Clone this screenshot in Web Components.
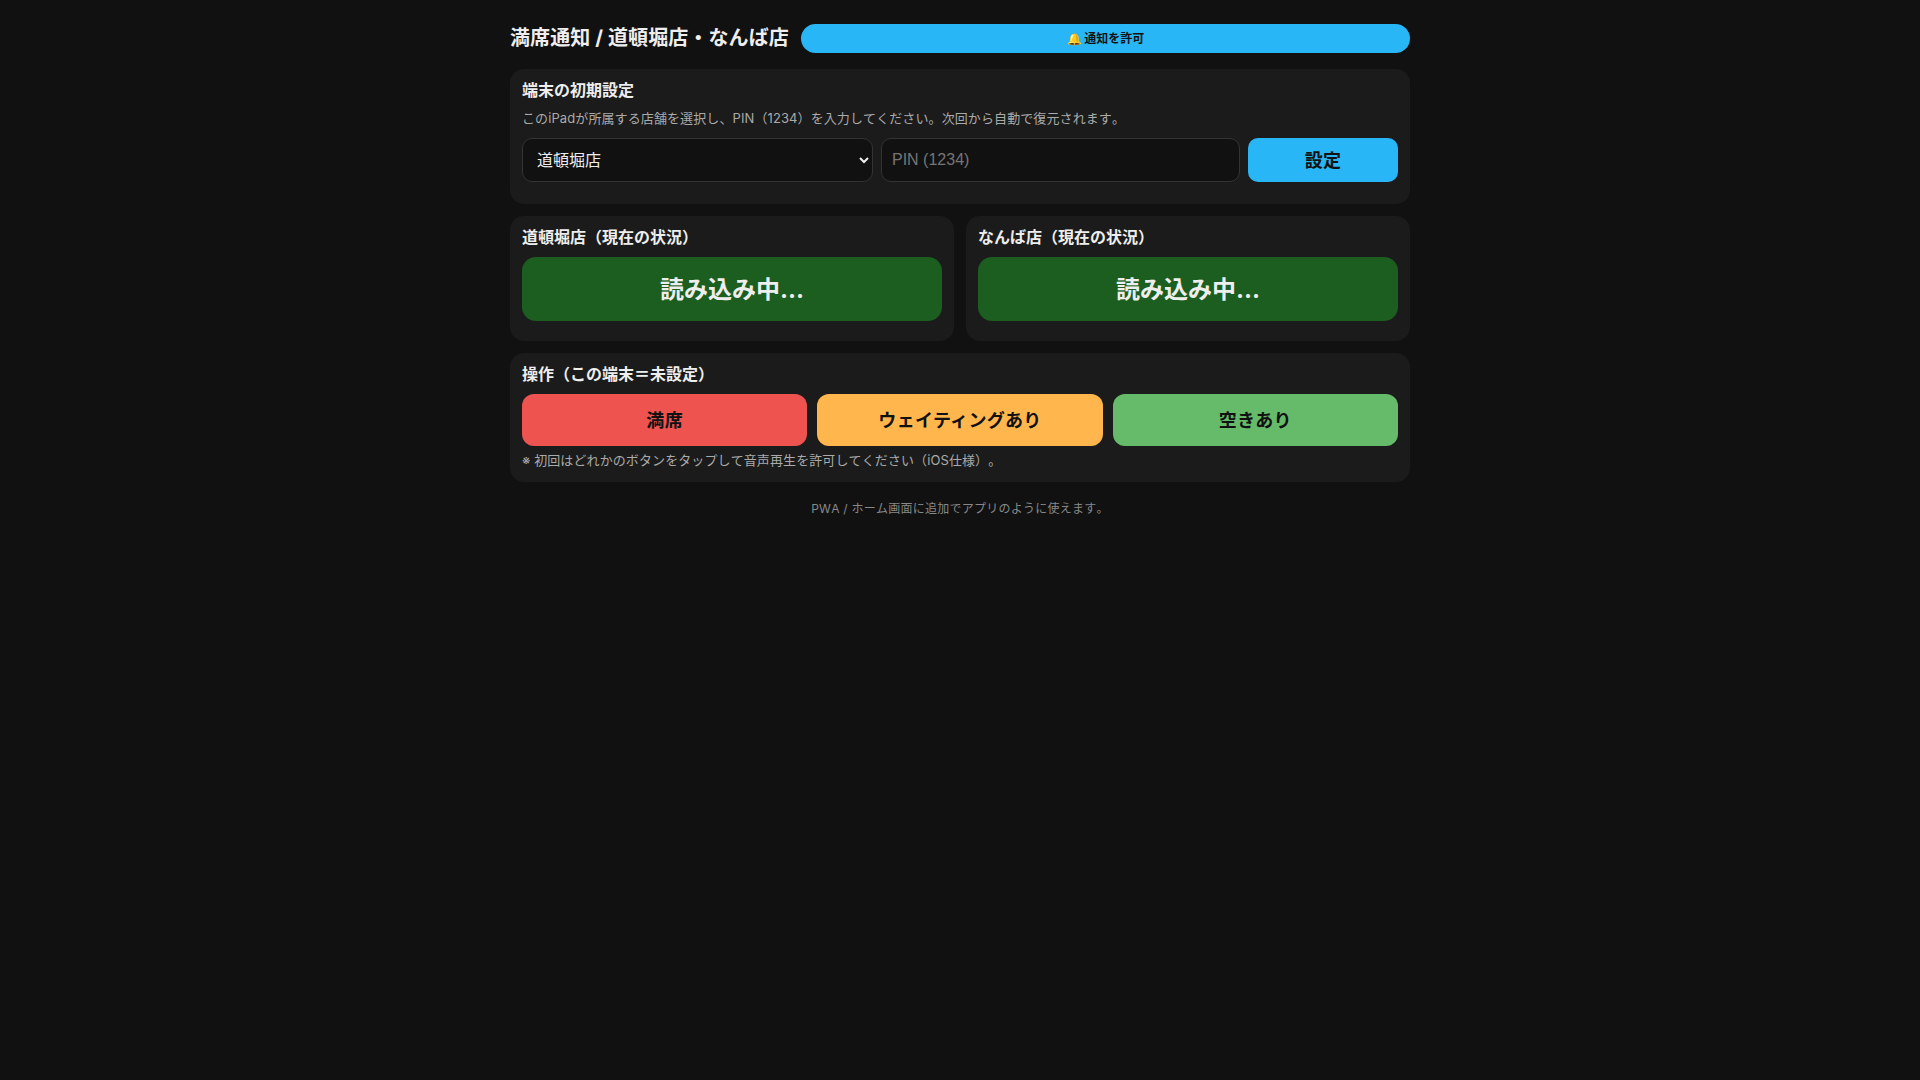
<!DOCTYPE html>
<html lang="ja">
<head>
<meta charset="utf-8">
<title>満席通知</title>
<style>
	html, body {
		margin: 0;
		background: #111;
		color: #eee;
		font-family: Inter, "Noto Sans CJK JP", sans-serif;
		font-kerning: none;
		text-spacing-trim: space-all;
		font-feature-settings: "chws" 0, "halt" 0;
	}
</style>
</head>
<body>
<seat-app></seat-app>

<script>
class panelCard extends HTMLElement {
	constructor() {
		super();
		this.attachShadow( { mode: 'open' } ).innerHTML = `
			<style>
				:host {
					display: block;
					background: #1b1b1b;
					border-radius: 14px;
					padding: 12px;
				}
				h2 {
					font-size: 16px;
					line-height: 18px;
					font-weight: 700;
					margin: 0 0 11px;
					color: #eee;
				}
			</style>
			<h2><slot name="title"></slot></h2>
			<slot></slot>
		`;
	}
}
customElements.define( 'panel-card', panelCard );

class actionButton extends HTMLElement {
	constructor() {
		super();
		const color = this.getAttribute( 'color' ) || '#29b6f6';
		this.attachShadow( { mode: 'open' } ).innerHTML = `
			<style>
				:host {
					display: block;
				}
				button {
					display: block;
					box-sizing: border-box;
					width: 100%;
					height: var(--btn-height, 52px);
					border: 0;
					border-radius: var(--btn-radius, 12px);
					background: ${color};
					color: #111;
					font-family: inherit;
					font-size: var(--btn-size, 18px);
					font-weight: 700;
					letter-spacing: var(--btn-spacing, .3px);
					padding: 0 0 2px;
					cursor: pointer;
				}
			</style>
			<button><slot></slot></button>
		`;
	}
}
customElements.define( 'action-button', actionButton );

class statusCard extends HTMLElement {
	constructor() {
		super();
		this.attachShadow( { mode: 'open' } ).innerHTML = `
			<style>
				:host {
					display: block;
				}
				panel-card {
					padding-bottom: 20px;
				}
				.status {
					box-sizing: border-box;
					height: 64px;
					padding-bottom: 3px;
					display: flex;
					align-items: center;
					justify-content: center;
					background: #1b5e20;
					border-radius: 14px;
					color: #eee;
					font-size: 24px;
					font-weight: 700;
				}
			</style>
			<panel-card>
				<span slot="title"><slot name="title"></slot></span>
				<div class="status"><slot></slot></div>
			</panel-card>
		`;
	}
}
customElements.define( 'status-card', statusCard );

class setupPanel extends HTMLElement {
	constructor() {
		super();
		this.attachShadow( { mode: 'open' } ).innerHTML = `
			<style>
				:host {
					display: block;
				}
				panel-card {
					padding-bottom: 22px;
				}
				p {
					margin: 0 0 12px;
					font-size: 13px;
					line-height: 16px;
					letter-spacing: .1px;
					color: #aaa;
				}
				.row {
					display: grid;
					grid-template-columns: 351fr 359fr 150px;
					gap: 8px;
				}
				select, input {
					box-sizing: border-box;
					width: 100%;
					height: 44px;
					padding: 10px;
					border: 1px solid #333;
					border-radius: 10px;
					background: #111;
					color: #eee;
					font-family: inherit;
					font-size: 16px;
					outline: none;
				}
				input {
					font-family: "Liberation Sans", sans-serif;
				}
				input::placeholder {
					color: #757575;
				}
				action-button {
					--btn-height: 44px;
					--btn-radius: 10px;
				}
			</style>
			<panel-card>
				<span slot="title">端末の初期設定</span>
				<p>このiPadが所属する店舗を選択し、PIN（1234）を入力してください。次回から自動で復元されます。</p>
				<div class="row">
					<select>
						<option>道頓堀店</option>
						<option>なんば店</option>
					</select>
					<input type="password" placeholder="PIN (1234)">
					<action-button>設定</action-button>
				</div>
			</panel-card>
		`;
	}
}
customElements.define( 'setup-panel', setupPanel );

class seatApp extends HTMLElement {
	constructor() {
		super();
		this.attachShadow( { mode: 'open' } ).innerHTML = `
			<style>
				:host {
					display: block;
					box-sizing: border-box;
					max-width: 900px;
					margin: 0 auto;
					padding-top: 24px;
				}
				header {
					display: flex;
					align-items: center;
					gap: 12px;
					margin-bottom: 16px;
				}
				h1 {
					margin: 0;
					font-size: 20px;
					line-height: 29px;
					font-weight: 700;
					letter-spacing: .1px;
					white-space: nowrap;
				}
				header action-button {
					flex: 1;
					--btn-height: 29px;
					--btn-radius: 999px;
					--btn-size: 12px;
					--btn-spacing: 0;
				}
				.stack {
					display: grid;
					gap: 12px;
				}
				.two {
					display: grid;
					grid-template-columns: 1fr 1fr;
					gap: 12px;
				}
				.actions {
					display: grid;
					grid-template-columns: repeat(3, 1fr);
					gap: 10px;
				}
				.note {
					margin: 6px 0 2px;
					font-size: 13px;
					line-height: 16px;
					letter-spacing: .1px;
					color: #aaa;
				}
				footer {
					margin-top: 18px;
					text-align: center;
					font-size: 12px;
					line-height: 17px;
					letter-spacing: .25px;
					color: #888;
				}
			</style>
			<header>
				<h1>満席通知 / 道頓堀店・なんば店</h1>
				<action-button>🔔 通知を許可</action-button>
			</header>
			<div class="stack">
				<setup-panel></setup-panel>
				<div class="two">
					<status-card>
						<span slot="title">道頓堀店（現在の状況）</span>
						読み込み中...
					</status-card>
					<status-card>
						<span slot="title">なんば店（現在の状況）</span>
						読み込み中...
					</status-card>
				</div>
				<panel-card>
					<span slot="title">操作（この端末＝未設定）</span>
					<div class="actions">
						<action-button color="#ef5350">満席</action-button>
						<action-button color="#ffb74d">ウェイティングあり</action-button>
						<action-button color="#66bb6a">空きあり</action-button>
					</div>
					<p class="note">※ 初回はどれかのボタンをタップして音声再生を許可してください（iOS仕様）。</p>
				</panel-card>
			</div>
			<footer>PWA / ホーム画面に追加でアプリのように使えます。</footer>
		`;
	}
}
customElements.define( 'seat-app', seatApp );
</script>
</body>
</html>
